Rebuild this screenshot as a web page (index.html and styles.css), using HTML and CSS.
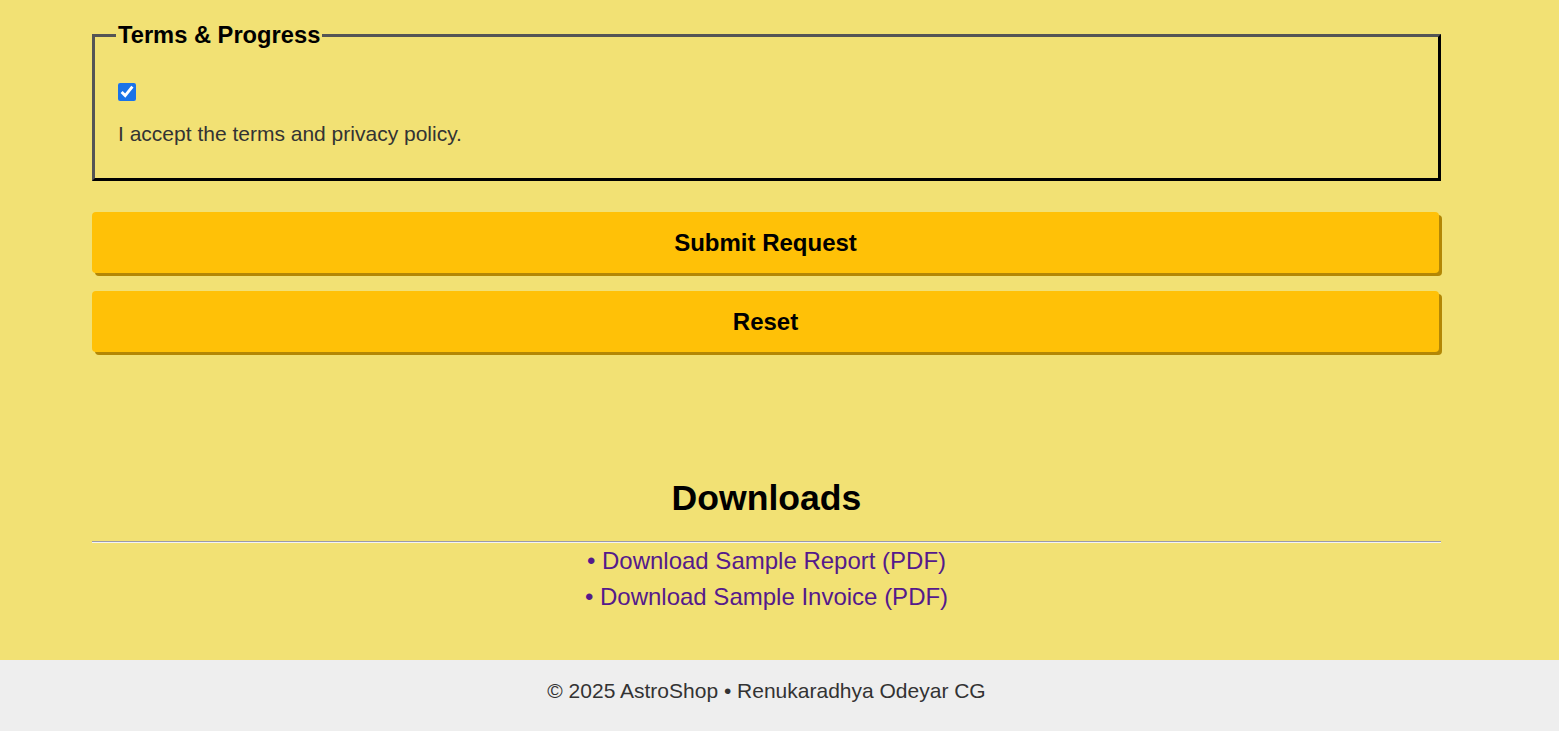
FILE: index.html
```html
<!DOCTYPE html>
<html lang="en">
<head>
<meta charset="utf-8">
<title>AstroShop</title>
<link rel="stylesheet" href="styles.css">
</head>
<body>
<main class="page">
  <form class="form">
    <fieldset class="terms">
      <legend class="terms-legend">Terms &amp; Progress</legend>
      <input class="terms-check" type="checkbox" checked>
      <p class="terms-text">I accept the terms and privacy policy.</p>
    </fieldset>
    <button type="button" class="btn">Submit Request</button>
    <button type="reset" class="btn">Reset</button>
  </form>
  <section class="downloads">
    <h2 class="downloads-title">Downloads</h2>
    <ul class="downloads-list">
      <li>• <a href="#report">Download Sample Report (PDF)</a></li>
      <li>• <a href="#invoice">Download Sample Invoice (PDF)</a></li>
    </ul>
  </section>
</main>
<footer class="footer">© 2025 AstroShop • Renukaradhya Odeyar CG</footer>
</body>
</html>
```

FILE: styles.css
```css
html, body {
  margin: 0;
  padding: 0;
}
body {
  background: #f2e174;
  font-family: "Liberation Sans", Arial, sans-serif;
  color: #333;
}
.page {
  width: 1349px;
  margin-left: 92px;
  padding-top: 22px;
}
.form {
  display: flex;
  flex-direction: column;
  align-items: flex-start;
}
.terms {
  box-sizing: border-box;
  width: 1349px;
  margin: 0;
  padding: 0 20px 32px 21px;
  border: 3px solid;
  border-color: #555 #000 #000 #555;
}
.terms-legend {
  padding: 0 2px;
  font-size: 23.7px;
  font-weight: bold;
  color: #000;
}
.terms-check {
  display: block;
  width: 18px;
  height: 18px;
  margin: 34px 0 0 2px;
  accent-color: #1a73e8;
}
.terms-text {
  margin: 21px 0 0 2px;
  font-size: 21px;
  line-height: 24px;
  color: #333;
}
.btn {
  width: 1347px;
  height: 61px;
  margin: 31px 0 0 0;
  border: none;
  border-radius: 4px;
  background: #ffc107;
  box-shadow: 3px 3px 0 #b38705;
  font-family: "Liberation Sans", Arial, sans-serif;
  font-size: 24px;
  font-weight: bold;
  color: #000;
  cursor: pointer;
}
.btn + .btn {
  margin-top: 18px;
}
.downloads {
  margin-top: 126px;
  text-align: center;
}
.downloads-title {
  margin: 0;
  font-size: 35.6px;
  line-height: 41px;
  color: #000;
  padding-bottom: 22px;
  border-bottom: 1px solid #9a9aab;
  box-shadow: 0 1px 0 #f4f4f4;
}
.downloads-list {
  list-style: none;
  margin: 1px 0 0;
  padding: 0 0 45px;
  font-size: 24px;
  line-height: 36px;
  color: #551a8b;
}
.downloads-list a {
  color: #551a8b;
  text-decoration: none;
}
.footer {
  background: #eeeeee;
  text-align: center;
  font-size: 21px;
  line-height: 24px;
  padding: 19px 26px 28px 0;
  color: #333;
}
```
